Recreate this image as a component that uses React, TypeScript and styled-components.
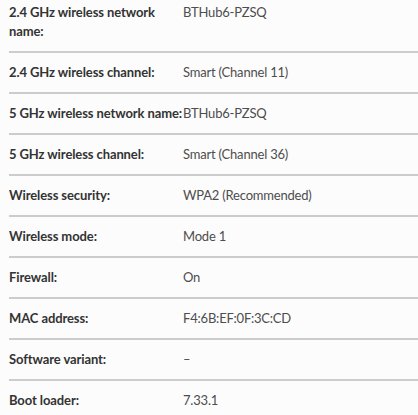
import React from "react";
import styled, { createGlobalStyle } from "styled-components";

const Global = createGlobalStyle`
  html, body {
    margin: 0;
    padding: 0;
    background: #fcfcfc;
  }
  body {
    font-family: Lato, "Noto Sans", sans-serif;
    overflow: hidden;
  }
`;

const List = styled.dl`
  margin: -7px 0 0 9px;
  padding: 0;
`;

const Row = styled.div`
  display: grid;
  grid-template-columns: 174px 1fr;
  padding: 10px 0;
  border-bottom: 2px solid #cccccc;
  font-size: 13px;
  line-height: 19px;
`;

const Label = styled.dt`
  margin: 0 -6px 0 0;
  font-weight: 700;
  color: #333333;
  letter-spacing: -0.1px;
`;

const Value = styled.dd`
  margin: 0;
  color: #4d4d4d;
  letter-spacing: -0.2px;
`;

const rows: [string, string][] = [
  ["2.4 GHz wireless network name:", "BTHub6-PZSQ"],
  ["2.4 GHz wireless channel:", "Smart (Channel 11)"],
  ["5 GHz wireless network name:", "BTHub6-PZSQ"],
  ["5 GHz wireless channel:", "Smart (Channel 36)"],
  ["Wireless security:", "WPA2 (Recommended)"],
  ["Wireless mode:", "Mode 1"],
  ["Firewall:", "On"],
  ["MAC address:", "F4:6B:EF:0F:3C:CD"],
  ["Software variant:", "–"],
  ["Boot loader:", "7.33.1"],
];

export default function App() {
  return (
    <>
      <Global />
      <List>
        {rows.map(([k, v]) => (
          <Row key={k}>
            <Label>{k}</Label>
            <Value>{v}</Value>
          </Row>
        ))}
      </List>
    </>
  );
}
